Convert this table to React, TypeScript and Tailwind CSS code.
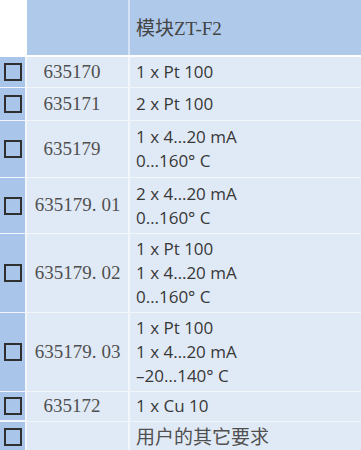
import React from "react";

type Row = { code: string; lines: string[]; h: number; short?: boolean };

const rows: Row[] = [
  { code: "635170", lines: ["1 x Pt 100"], h: 30, short: true },
  { code: "635171", lines: ["2 x Pt 100"], h: 32, short: true },
  { code: "635179", lines: ["1 x 4…20 mA", "0…160° C"], h: 56, short: true },
  { code: "635179.01", lines: ["2 x 4…20 mA", "0…160° C"], h: 55 },
  { code: "635179.02", lines: ["1 x Pt 100", "1 x 4…20 mA", "0…160° C"], h: 78 },
  { code: "635179.03", lines: ["1 x Pt 100", "1 x 4…20 mA", "–20…140° C"], h: 78 },
  { code: "635172", lines: ["1 x Cu 10"], h: 28, short: true },
  { code: "", lines: ["用户的其它要求"], h: 30 },
];

const serif = "font-['Liberation_Serif','Noto_Sans_CJK_SC',serif]";
const sans = "font-['Open_Sans','Noto_Sans_CJK_SC',sans-serif]";

function Code({ code }: { code: string }) {
  const i = code.indexOf(".");
  if (i < 0) return <>{code}</>;
  return (
    <>
      {code.slice(0, i)}
      <span className="mr-[5px]">.</span>
      {code.slice(i + 1)}
    </>
  );
}

export default function App() {
  return (
    <div className="w-[361px] h-[450px] overflow-hidden bg-white">
      <div className="grid grid-cols-[25px_101px_1fr] gap-x-[2px] h-[55px] bg-white">
        <div className="bg-white" />
        <div className="bg-[#afc9ea]" />
        <div className="bg-[#afc9ea] relative">
          <div className="absolute -left-[2px] top-0 bottom-0 w-[2px] bg-[#d6e3f4]" />
          <div className={`h-full flex items-center pl-[6px] pt-[3px] text-[19px] text-[#444] ${serif}`}>
            模块ZT-F2
          </div>
        </div>
      </div>
      <div className="mt-[2px] grid grid-cols-[25px_101px_1fr] gap-x-[2px] gap-y-[1px] bg-[#f2f6fb]">
        {rows.map((r, idx) => (
          <React.Fragment key={idx}>
            <div className="bg-[#a9c5e9] flex items-center justify-center" style={{ height: r.h }}>
              <div className="w-[18px] h-[18px] border-2 border-[#2f2f2f] bg-[#a9c5e9]" />
            </div>
            <div
              className={`bg-[#e0eaf6] flex items-center justify-center text-[19px] text-[#505050] ${serif} ${
                r.short ? "pr-[11px]" : ""
              }`}
            >
              <Code code={r.code} />
            </div>
            <div className={`bg-[#e0eaf6] flex flex-col justify-center pl-[6px] text-[17px] leading-[24px] text-[#383838] ${sans}`}>
              {r.lines.map((l, j) => (
                <div key={j} className={l.startsWith("用") ? "text-[19px] text-[#505050]" : ""}>
                  {l}
                </div>
              ))}
            </div>
          </React.Fragment>
        ))}
      </div>
    </div>
  );
}
